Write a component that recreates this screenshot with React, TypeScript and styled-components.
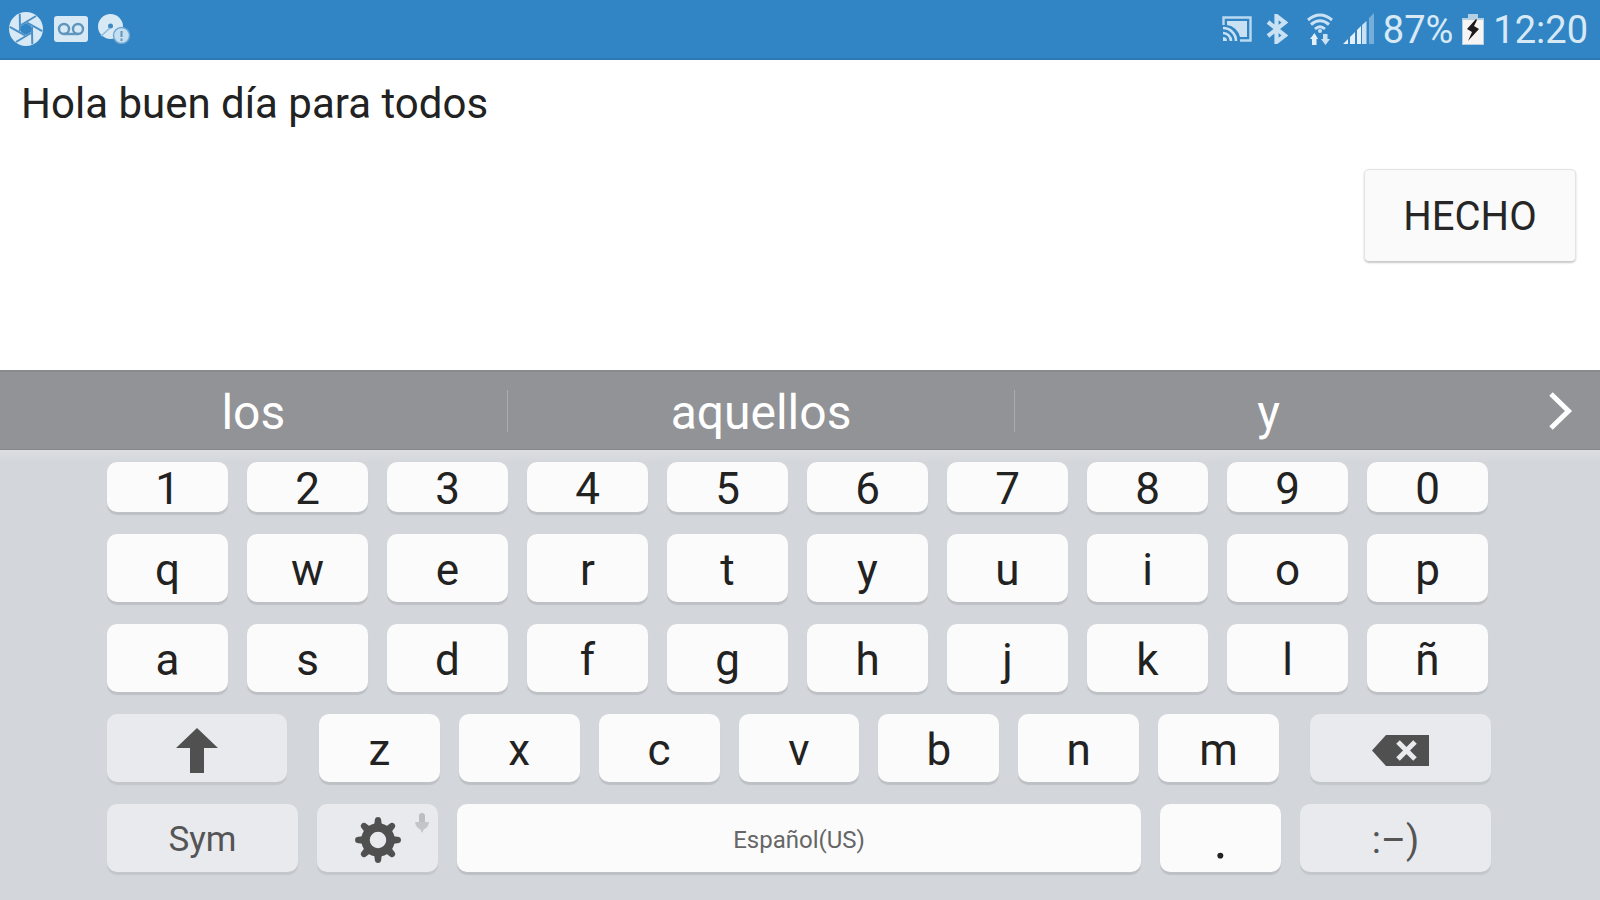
import React from 'react';
import styled, { createGlobalStyle } from 'styled-components';

const GlobalStyle = createGlobalStyle`
  * { box-sizing: border-box; }
  body { margin: 0; background: #ffffff; font-family: Roboto, "Liberation Sans", sans-serif; }
  button, textarea { font-family: inherit; margin: 0; }
`;

const Screen = styled.div`
  display: flex;
  flex-direction: column;
  min-height: 100vh;
`;

const StatusBar = styled.header`
  display: flex;
  align-items: center;
  justify-content: space-between;
  height: 60px;
  padding: 0 12px 0 8px;
  background: #3285c5;
  border-bottom: 2px solid #2b78b4;
  color: #d8e9f6;
  svg { display: block; flex: none; }
`;

const StatusGroup = styled.div<{ $gap: number }>`
  display: flex;
  align-items: center;
  gap: ${(p) => p.$gap}px;
`;

const StatusText = styled.span`
  padding-top: 2px;
  font-size: 38px;
  line-height: 56px;
  white-space: nowrap;
`;

const Compose = styled.main`
  display: flex;
  flex: 1;
  align-items: flex-start;
  padding: 16px 24px 0 21px;
`;

const Message = styled.textarea`
  flex: 1;
  align-self: stretch;
  min-width: 0;
  padding: 0;
  border: 0;
  outline: 0;
  resize: none;
  background: transparent;
  color: #222222;
  font-size: 42px;
  line-height: 56px;
`;

const DoneButton = styled.button`
  width: 212px;
  height: 93px;
  margin-top: 93px;
  padding: 2px 0 0;
  border: 1px solid #e4e4e4;
  border-bottom-color: #cccccc;
  border-radius: 5px;
  background: #fafafa;
  box-shadow: 0 1px 2px rgba(0, 0, 0, 0.22);
  color: #262626;
  font-size: 40px;
`;

const Suggestions = styled.div`
  display: flex;
  align-items: center;
  height: 80px;
  border-top: 2px solid #8a8b8f;
  border-bottom: 1px solid #86878b;
  background: #929397;
`;

const Suggestion = styled.button`
  flex: 507 1 0;
  height: 77px;
  padding: 4px 0 0;
  border: 0;
  background: transparent;
  color: #ffffff;
  font-size: 48px;
  line-height: 72px;
`;

const Divider = styled.span`
  width: 1px;
  height: 42px;
  background: #abacb0;
`;

const MoreButton = styled.button`
  display: flex;
  flex: 78 1 0;
  align-items: center;
  justify-content: center;
  height: 77px;
  padding: 0;
  border: 0;
  background: transparent;
`;

const Keyboard = styled.section`
  display: flex;
  flex-direction: column;
  gap: 22px;
  padding: 12px 109px 28px 107px;
  background: linear-gradient(#dcdde1 0, #d3d7db 12px);
`;

const KeyRow = styled.div<{ $inset?: boolean }>`
  display: flex;
  gap: 19px;
  padding-right: ${(p) => (p.$inset ? 3 : 0)}px;
`;

const LetterGroup = styled.div`
  display: flex;
  flex: 961;
  gap: 19px;
  margin: 0 12px 0 13px;
`;

const Key = styled.button<{ $grow?: number; $short?: boolean; $fn?: boolean; $size?: number }>`
  position: relative;
  display: flex;
  flex: ${(p) => p.$grow ?? 121} 1 0;
  align-items: center;
  justify-content: center;
  min-width: 0;
  height: ${(p) => (p.$short ? 50 : 68)}px;
  padding: 4px 0 0;
  border: 0;
  border-radius: 10px;
  background: ${(p) => (p.$fn ? '#e8eaed' : '#fbfbfb')};
  box-shadow: 0 3px 1px ${(p) => (p.$fn ? '#c3c7cb' : '#bdc1c5')};
  color: ${(p) => (p.$fn ? '#555555' : '#222222')};
  font-size: ${(p) => p.$size ?? 44}px;
  line-height: 50px;
`;

const SpaceKey = styled(Key)`
  color: #666666;
`;

const MicHint = styled.svg`
  position: absolute;
  top: 9px;
  right: 8px;
`;

const blades = [0, 60, 120, 180, 240, 300];

const ApertureIcon = () => (
  <svg width="36" height="36" viewBox="0 0 36 36">
    <circle cx="18" cy="18" r="17" fill="#d8e9f6" />
    <polygon points="18,12 23,15 23,21 18,24 13,21 13,15" fill="#3285c5" />
    {blades.map((a) => (
      <path key={a} d="M13 14 L28 5" transform={`rotate(${a} 18 18)`} stroke="#4a90c6" strokeWidth="2" fill="none" />
    ))}
  </svg>
);

const VoicemailIcon = () => (
  <svg width="36" height="26" viewBox="0 0 36 26">
    <rect x="1" y="0" width="34" height="26" rx="3" fill="#d8e9f6" />
    <g fill="none" stroke="#6096bd" strokeWidth="2.4">
      <circle cx="11" cy="13" r="5" />
      <circle cx="25" cy="13" r="5" />
      <path d="M11 18 H25" />
    </g>
  </svg>
);

const DiscIcon = () => (
  <svg width="32" height="30" viewBox="0 0 32 30">
    <circle cx="12.500" cy="12.500" r="12.500" fill="#d8e9f6" />
    <circle cx="12.500" cy="12" r="2.500" fill="#3f88bf" />
    <path d="M3 22 L12 14" stroke="#8bb9dd" strokeWidth="1.500" />
    <circle cx="23.500" cy="21.500" r="8" fill="#c5dff1" stroke="#6ea6d3" strokeWidth="1.400" />
    <path d="M23.500 17 V23 M23.500 24.500 V27" stroke="#6096bd" strokeWidth="2" />
  </svg>
);

const CastIcon = () => (
  <svg width="30" height="26" viewBox="0 0 30 26">
    <path d="M1.500 9 V1.500 H28.500 V24.500 H18" fill="none" stroke="#b9d9f0" strokeWidth="2.400" />
    <path d="M5 5 H25 V21 H18 A15 15 0 0 0 5 9 Z" fill="#c9e1f3" />
    <path d="M1 12 A13 13 0 0 1 14 25 M1 17 A8 8 0 0 1 9 25" fill="none" stroke="#c9e1f3" strokeWidth="2.600" />
    <path d="M1 21 A4 4 0 0 1 5 25 H1 Z" fill="#c9e1f3" />
  </svg>
);

const BluetoothIcon = () => (
  <svg width="22" height="30" viewBox="0 0 22 30">
    <path d="M2 8 L19 21.500 L10.500 28 V2 L19 8.500 L2 22" fill="none" stroke="#c9e1f3" strokeWidth="4.200" />
  </svg>
);

const WifiIcon = () => (
  <svg width="28" height="32" viewBox="0 0 28 32">
    <g fill="none" stroke="#c9e1f3" strokeWidth="3">
      <path d="M2 7 Q14 -3 26 7" />
      <path d="M5 11.500 Q14 4 23 11.500" />
      <path d="M9 16 Q14 11.500 19 16" />
    </g>
    <circle cx="14" cy="18" r="2" fill="#c9e1f3" />
    <path d="M6 32 V26 H4 L8.500 20 L12 26 H10.500 V32 Z" fill="#e3f0f9" />
    <path d="M17 21 H21.500 V26 H24 L19.500 32 L15 26 H17 Z" fill="#c9e1f3" />
  </svg>
);

const SignalIcon = () => (
  <svg width="31" height="32" viewBox="0 0 31 32">
    <path d="M0 31 L5 26 V31 Z M7 24 L12 19 V31 H7 Z M14 17 L18 13 V31 H14 Z" fill="#e3f0f9" />
    <path d="M19 12 L23.500 8 V31 H19 Z" fill="#c9e1f3" />
    <path d="M26 5 L31 0 V31 H26 Z" fill="#75addb" />
  </svg>
);

const BatteryIcon = () => (
  <svg width="22" height="31" viewBox="0 0 22 31">
    <path d="M6 0 H16 V4 H22 V31 H0 V4 H6 Z" fill="#b5cfe2" />
    <path d="M1 6 H21 V30 H1 Z" fill="#f6f5f3" />
    <path d="M14 5 L5 15 L10 18 L6 27 L17 15 L12 12 L15 6 Z" fill="#1f1a1b" />
  </svg>
);

const ChevronIcon = () => (
  <svg width="24" height="38" viewBox="0 0 24 38">
    <path d="M2 2 L19.500 19 L2 36" fill="none" stroke="#ffffff" strokeWidth="5" />
  </svg>
);

const ShiftIcon = () => (
  <svg width="42" height="45" viewBox="0 0 42 45">
    <path d="M21 0 L42 20 H28 V45 H14 V20 H0 Z" fill="#505050" />
  </svg>
);

const BackspaceIcon = () => (
  <svg width="57" height="31" viewBox="0 0 57 31">
    <path d="M0 15.500 L14 0 H57 V31 H14 Z" fill="#505050" />
    <path d="M26 7 L43 24 M43 7 L26 24" stroke="#e8eaed" strokeWidth="5" />
  </svg>
);

const teeth = [0, 45, 90, 135, 180, 225, 270, 315];

const GearIcon = () => (
  <svg width="48" height="48" viewBox="0 0 48 48">
    <circle cx="24" cy="24" r="12.500" fill="none" stroke="#505050" strokeWidth="8.500" />
    {teeth.map((a) => (
      <path key={a} d="M20 10 L21 3 Q21.500 1 24 1 Q26.500 1 27 3 L28 10 Z" transform={`rotate(${a} 24 24)`} fill="#505050" />
    ))}
  </svg>
);

const letters = (chars: string, short = false) =>
  chars.split('').map((c) => (
    <Key key={c} type="button" $short={short}>
      {c}
    </Key>
  ));

export default function App() {
  return (
    <Screen>
      <GlobalStyle />
      <StatusBar>
        <StatusGroup $gap={9}>
          <ApertureIcon />
          <VoicemailIcon />
          <DiscIcon />
        </StatusGroup>
        <StatusGroup $gap={18}>
          <StatusGroup $gap={14}>
            <CastIcon />
            <BluetoothIcon />
          </StatusGroup>
          <StatusGroup $gap={9}>
            <WifiIcon />
            <SignalIcon />
            <StatusText>87%</StatusText>
            <BatteryIcon />
            <StatusText>12:20</StatusText>
          </StatusGroup>
        </StatusGroup>
      </StatusBar>

      <Compose>
        <Message aria-label="Mensaje" spellCheck={false} defaultValue="Hola buen día para todos" />
        <DoneButton type="button">HECHO</DoneButton>
      </Compose>

      <Suggestions>
        <Suggestion type="button">los</Suggestion>
        <Divider />
        <Suggestion type="button">aquellos</Suggestion>
        <Divider />
        <Suggestion type="button">y</Suggestion>
        <MoreButton type="button" aria-label="Más sugerencias">
          <ChevronIcon />
        </MoreButton>
      </Suggestions>

      <Keyboard aria-label="Teclado">
        <KeyRow $inset>{letters('1234567890', true)}</KeyRow>
        <KeyRow $inset>{letters('qwertyuiop')}</KeyRow>
        <KeyRow $inset>{letters('asdfghjklñ')}</KeyRow>
        <KeyRow>
          <Key type="button" $fn $grow={180} aria-label="Mayúsculas">
            <ShiftIcon />
          </Key>
          <LetterGroup>{letters('zxcvbnm')}</LetterGroup>
          <Key type="button" $fn $grow={181} aria-label="Borrar">
            <BackspaceIcon />
          </Key>
        </KeyRow>
        <KeyRow>
          <Key type="button" $fn $grow={191} $size={35}>
            Sym
          </Key>
          <Key type="button" $fn aria-label="Ajustes">
            <GearIcon />
            <MicHint width="16" height="20" viewBox="0 0 16 20">
              <rect x="5" y="0" width="6" height="12" rx="3" fill="#bcbec1" />
              <path d="M1 9 H15 Q14 15 10 16 L8 20 L6 16 Q2 15 1 9 Z" fill="#c3c5c8" />
            </MicHint>
          </Key>
          <SpaceKey type="button" $grow={684} $size={24}>
            Español(US)
          </SpaceKey>
          <Key type="button" $size={54}>
            .
          </Key>
          <Key type="button" $fn $grow={191} $size={38}>
            :–)
          </Key>
        </KeyRow>
      </Keyboard>
    </Screen>
  );
}
